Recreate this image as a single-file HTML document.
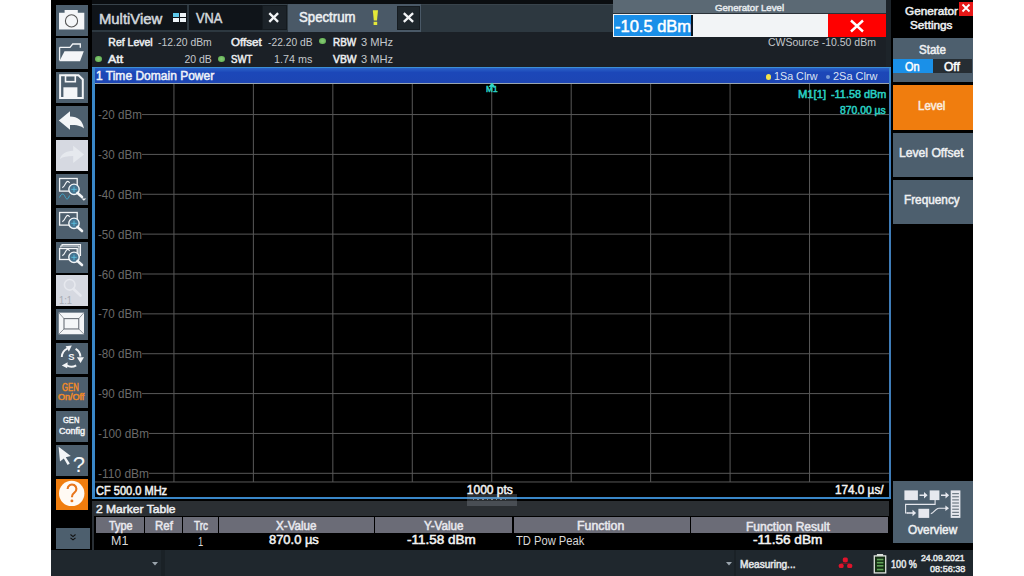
<!DOCTYPE html>
<html><head><meta charset="utf-8"><title>Spectrum</title>
<style>
*{margin:0;padding:0;box-sizing:border-box}
html,body{width:1024px;height:576px;overflow:hidden;background:#fff}
body{position:relative;font-family:"Liberation Sans",sans-serif;color:#e8eaec}
.a{position:absolute}
.t{position:absolute;white-space:nowrap;line-height:1;transform-origin:0 0}
.btn{position:absolute;left:56px;width:32px;height:31px;background:#4d5f6e}
.btn svg{position:absolute;left:0;top:0;overflow:visible}
.sk{position:absolute;left:893px;width:80px;background:#4d5f6e}
.hdr{position:absolute;top:517px;height:16px;background:#6b6c77}
</style></head><body>
<div class="a" style="left:51px;top:0px;width:41px;height:550px;background:#000;"></div>
<div class="a" style="left:92px;top:0px;width:799px;height:4px;background:#0a0d10;"></div>
<div class="a" style="left:92px;top:4px;width:799px;height:28px;background:#2d3840;"></div>
<div class="a" style="left:92px;top:4px;width:799px;height:1px;background:#38434b;"></div>
<div class="a" style="left:92px;top:5px;width:95px;height:25px;background:#0f1419;"></div>
<div class="a" style="left:189px;top:5px;width:73px;height:25px;background:#0f1419;"></div>
<div class="a" style="left:262px;top:5px;width:25px;height:25px;background:#141a1f;"></div>
<div class="a" style="left:263px;top:6px;width:23px;height:23px;background:#1c2329;"></div>
<div class="a" style="left:288px;top:4px;width:133px;height:28px;background:#4a5967;"></div>
<div class="a" style="left:397px;top:6px;width:23px;height:24px;background:#161c21;"></div>
<div class="a" style="left:398px;top:7px;width:21px;height:22px;background:#1f272d;"></div>
<div class="a" style="left:173px;top:13px;width:6px;height:4px;background:#5cc8ea;"></div>
<div class="a" style="left:180px;top:13px;width:6px;height:4px;background:#eef4f8;"></div>
<div class="a" style="left:173px;top:18px;width:6px;height:4px;background:#eef4f8;"></div>
<div class="a" style="left:180px;top:18px;width:6px;height:4px;background:#eef4f8;"></div>
<svg class="a" style="left:267px;top:11px" width="13" height="13"><path d="M2.3 2.1L11.1 10.9M11.1 2.1L2.3 10.9" stroke="#f2f4f6" stroke-width="2.3"/></svg>
<svg class="a" style="left:402px;top:11px" width="13" height="13"><path d="M1.8 2.1L11.1 10.9M11.1 2.1L1.8 10.9" stroke="#f2f4f6" stroke-width="2.3"/></svg>
<svg class="a" style="left:371px;top:9px" width="9" height="17"><path d="M1.8 1.2h5.2l-1 10.3h-3.2z" fill="#e4e838"/><rect x="2.6" y="12.8" width="3.6" height="3.2" fill="#e4e838"/></svg>
<div class="a" style="left:92px;top:32px;width:799px;height:35px;background:#1b2026;"></div>
<div class="a" style="left:886px;top:0px;width:5px;height:67px;background:#1d242a;"></div>
<div class="a" style="left:95px;top:55.6px;width:7px;height:6.6px;border-radius:50%;background:radial-gradient(#88cc78,#5aaa4a)"></div>
<div class="a" style="left:218px;top:55.6px;width:7px;height:6.6px;border-radius:50%;background:radial-gradient(#88cc78,#5aaa4a)"></div>
<div class="a" style="left:319px;top:37.6px;width:7px;height:6.6px;border-radius:50%;background:radial-gradient(#88cc78,#5aaa4a)"></div>
<div class="a" style="left:613px;top:0px;width:273px;height:13px;background:#5b6974;"></div>
<div class="a" style="left:613px;top:13px;width:273px;height:1px;background:#2a3138;"></div>
<div class="a" style="left:613px;top:14px;width:215px;height:23px;background:#f2f4f6;"></div>
<div class="a" style="left:614px;top:15px;width:77px;height:21px;background:#1a8fe8;"></div>
<div class="a" style="left:691px;top:15px;width:2px;height:21px;background:#0a1520;"></div>
<div class="a" style="left:828px;top:14px;width:58px;height:23px;background:#ff0000;"></div>
<svg class="a" style="left:849px;top:19px" width="16" height="14"><path d="M2 1.5L14 12.5M14 1.5L2 12.5" stroke="#fff" stroke-width="2.4"/></svg>
<div class="a" style="left:92px;top:67px;width:798.5px;height:432px;background:#3a87c8;"></div>
<div class="a" style="left:888.5px;top:83px;width:2px;height:414px;background:#3f7cb8;"></div>
<div class="a" style="left:92px;top:66.8px;width:798.5px;height:1.6px;background:#3d8fd6;"></div>
<div class="a" style="left:95px;top:68.4px;width:793.5px;height:14.6px;background:linear-gradient(#2a62c8,#1c47b8 30%,#1d46b4);"></div>
<div class="a" style="left:95px;top:83px;width:793.5px;height:414px;background:#000;"></div>
<svg class="a" style="left:95px;top:83px" width="794" height="414"><g stroke="#585858" stroke-width="1" fill="none"><rect x="0" y="0" width="794" height="1" fill="#9aa6ae" stroke="none"/><line x1="78.94" y1="1" x2="78.94" y2="399"/><line x1="158.39" y1="1" x2="158.39" y2="399"/><line x1="237.84" y1="1" x2="237.84" y2="399"/><line x1="317.29" y1="1" x2="317.29" y2="399"/><line x1="396.74" y1="1" x2="396.74" y2="399"/><line x1="476.19" y1="1" x2="476.19" y2="399"/><line x1="555.64" y1="1" x2="555.64" y2="399"/><line x1="635.09" y1="1" x2="635.09" y2="399"/><line x1="714.54" y1="1" x2="714.54" y2="399"/><line x1="0" y1="31.56" x2="794" y2="31.56"/><line x1="0" y1="71.42" x2="794" y2="71.42"/><line x1="0" y1="111.28" x2="794" y2="111.28"/><line x1="0" y1="151.14" x2="794" y2="151.14"/><line x1="0" y1="191.00" x2="794" y2="191.00"/><line x1="0" y1="230.86" x2="794" y2="230.86"/><line x1="0" y1="270.72" x2="794" y2="270.72"/><line x1="0" y1="310.58" x2="794" y2="310.58"/><line x1="0" y1="350.44" x2="794" y2="350.44"/><line x1="0" y1="390.30" x2="794" y2="390.30"/><line x1="0" y1="398.97" x2="794" y2="398.97"/></g></svg>
<div class="a" style="left:95px;top:108.56px;width:46.7px;height:12px;background:#000;"></div>
<div class="a" style="left:95px;top:148.42px;width:46.7px;height:12px;background:#000;"></div>
<div class="a" style="left:95px;top:188.28px;width:46.7px;height:12px;background:#000;"></div>
<div class="a" style="left:95px;top:228.14px;width:46.7px;height:12px;background:#000;"></div>
<div class="a" style="left:95px;top:268px;width:46.7px;height:12px;background:#000;"></div>
<div class="a" style="left:95px;top:307.86px;width:46.7px;height:12px;background:#000;"></div>
<div class="a" style="left:95px;top:347.72px;width:46.7px;height:12px;background:#000;"></div>
<div class="a" style="left:95px;top:387.58px;width:46.7px;height:12px;background:#000;"></div>
<div class="a" style="left:95px;top:427.44px;width:54.15px;height:12px;background:#000;"></div>
<div class="a" style="left:95px;top:467.3px;width:54.15px;height:12px;background:#000;"></div>
<div class="a" style="left:765.5px;top:74px;width:5.5px;height:5.5px;border-radius:50%;background:#f2e24a"></div>
<div class="a" style="left:825.5px;top:74.5px;width:4.5px;height:4.5px;border-radius:50%;background:#7a9ed8"></div>
<svg class="a" style="left:488px;top:82px" width="8" height="6"><path d="M4 0.5L7.5 5H0.5z" fill="#30d8c0"/></svg>
<div class="a" style="left:92px;top:499px;width:799px;height:51px;background:#000;"></div>
<div class="a" style="left:92px;top:501px;width:1.5px;height:49px;background:#2a3036;"></div>
<div class="a" style="left:94px;top:501px;width:795px;height:15px;background:#2b2f33;"></div>
<div class="a" style="left:467px;top:494px;width:50px;height:11.5px;background:rgba(150,160,172,0.28);"></div>
<div class="a" style="left:473px;top:499px;width:35px;height:1px;background:repeating-linear-gradient(90deg,rgba(200,205,210,0.55) 0 1.5px,transparent 1.5px 4.5px)"></div>
<div class="a" style="left:96px;top:517px;width:48px;height:16px;background:#6b6c77;"></div>
<div class="a" style="left:145px;top:517px;width:37px;height:16px;background:#6b6c77;"></div>
<div class="a" style="left:183px;top:517px;width:35px;height:16px;background:#6b6c77;"></div>
<div class="a" style="left:219px;top:517px;width:155px;height:16px;background:#6b6c77;"></div>
<div class="a" style="left:375px;top:517px;width:137px;height:16px;background:#6b6c77;"></div>
<div class="a" style="left:513.5px;top:517px;width:176.5px;height:16px;background:#6b6c77;"></div>
<div class="a" style="left:691px;top:517px;width:196.5px;height:16px;background:#6b6c77;"></div>
<div class="a" style="left:51px;top:550px;width:922px;height:26px;background:#1f272d;"></div>
<div class="a" style="left:161px;top:550px;width:4px;height:26px;background:#1a2126;"></div>
<div class="a" style="left:734px;top:550px;width:2px;height:26px;background:#1a2126;"></div>
<svg class="a" style="left:152px;top:562px" width="6" height="4"><path d="M0 0H6L3 3.5z" fill="#9aa4ac"/></svg>
<svg class="a" style="left:726px;top:562px" width="6" height="4"><path d="M0 0H6L3 3.5z" fill="#9aa4ac"/></svg>
<svg class="a" style="left:836px;top:555px" width="18" height="16"><g fill="#e0142c"><rect x="6.8" y="2.6" width="5" height="4.6" rx="1.5"/><rect x="2.8" y="8.8" width="4.8" height="4.2" rx="1.5"/><rect x="11.2" y="8.8" width="5" height="4.2" rx="1.5"/></g><path d="M9.3 7V8.3M5.2 9V8.3H13.7V9" stroke="#a01020" stroke-width="0.8" fill="none"/></svg>
<svg class="a" style="left:873px;top:553px" width="14" height="21"><rect x="3.9" y="1" width="6.2" height="2.2" fill="#dfe3df"/><rect x="1.3" y="2.9" width="11.4" height="17" fill="#153015" stroke="#dfe3df" stroke-width="1.3"/><g fill="#62a45a"><rect x="3.9" y="5.75" width="6.5" height="1.6"/><rect x="3.9" y="8.9" width="6.5" height="1.6"/><rect x="3.9" y="12" width="6.5" height="1.6"/><rect x="3.9" y="15.75" width="6.5" height="1.6"/></g></svg>
<div class="a" style="left:891px;top:0px;width:82px;height:550px;background:#000;"></div>
<div class="a" style="left:959px;top:1.5px;width:14px;height:14px;background:#e81818;"></div>
<svg class="a" style="left:961px;top:3px" width="10" height="10"><path d="M1.5 1.5L8.5 8.5M8.5 1.5L1.5 8.5" stroke="#fff" stroke-width="1.8"/></svg>
<div class="sk" style="top:37.5px;height:44.5px"></div>
<div class="a" style="left:893px;top:59px;width:39.5px;height:14px;background:#1a90e8;"></div>
<div class="a" style="left:932.5px;top:59px;width:39.5px;height:14px;background:#262d33;"></div>
<div class="sk" style="top:85px;height:45px;background:#f07d0e"></div>
<div class="sk" style="top:132.5px;height:44.5px"></div>
<div class="sk" style="top:180px;height:44px"></div>
<div class="sk" style="top:481px;height:62px"></div>
<svg class="a" style="left:893px;top:481px" width="80" height="40"><g fill="#e6e8ee">
<rect x="11.4" y="9.4" width="13.5" height="9.7"/><rect x="36.7" y="9.4" width="9.7" height="9.7"/><rect x="25.4" y="27.8" width="10.8" height="9.1"/>
<rect x="57.7" y="9.4" width="9.7" height="27.5"/>
<path d="M26.5 13.5h4.5v-2.4l3.6 3.2-3.6 3.2v-2.4h-4.5z"/><path d="M48 13.5h4.5v-2.4l3.6 3.2-3.6 3.2v-2.4h-4.5z"/>
<path d="M14 31.2h5.5v-2.4l3.6 3.2-3.6 3.2v-2.4h-5.5z"/>
<path d="M52.4 24.6l3.6 2.7-3.6 2.7z"/>
</g><g stroke="#e6e8ee" stroke-width="1.1" fill="none"><path d="M42.1 19v4.4H12.6v8.6h2"/><path d="M37.8 32.6C40.5 32.6 42.5 27.3 45.9 27.3H53"/></g>
<g fill="#56646f"><rect x="59.2" y="12.2" width="6.7" height="1"/><rect x="59.2" y="15.3" width="6.7" height="1"/><rect x="59.2" y="18.4" width="6.7" height="1"/><rect x="59.2" y="21.5" width="6.7" height="1"/><rect x="59.2" y="24.6" width="6.7" height="1"/><rect x="59.2" y="27.7" width="6.7" height="1"/><rect x="59.2" y="30.8" width="6.7" height="1"/><rect x="59.2" y="33.9" width="6.7" height="1"/></g>
</svg>
<div class="btn" style="top:4.60px;background:#4d5f6e"><svg width="32" height="31"><path d="M8.6 5h13.2v2.8H28.3v16.6H3V7.8h5.6z" fill="#f4f6f8"/><circle cx="15.5" cy="15.9" r="6.1" fill="none" stroke="#555" stroke-width="1.1"/></svg></div>
<div class="btn" style="top:38.45px;background:#4d5f6e"><svg width="32" height="31"><path d="M3.6 9.3V22.5M3.6 9.3H14l2.7-3.3h7.6v3.7" fill="none" stroke="#f4f6f8" stroke-width="1.3"/><path d="M8.5 13.2H27.8L24 23.3H3.4z" fill="#f4f6f8"/></svg></div>
<div class="btn" style="top:72.30px;background:#4d5f6e"><svg width="32" height="31"><path d="M4.1 3.2H22.5L26.8 7.5V26H4.1z" fill="none" stroke="#f4f6f8" stroke-width="2"/><rect x="9.5" y="3.5" width="9.8" height="6.2" fill="none" stroke="#f4f6f8" stroke-width="1.6"/><rect x="7.4" y="15.3" width="14" height="11" fill="#f4f6f8"/></svg></div>
<div class="btn" style="top:106.15px;background:#4d5f6e"><svg width="32" height="31"><path d="M2.8 14.4L14 5.3V10.6C22 10.6 26.5 14.5 28 22.5C25 19.5 21 18.9 14 18.9V23.7z" fill="#f4f6f8"/></svg></div>
<div class="btn" style="top:140.00px;background:#d6d9e1"><svg width="32" height="31"><path d="M28 14.4L17.2 5.7V10.8C9.5 10.8 5 14.5 4 19C7 16.8 11 16 17.2 16V23z" fill="#e6e9ee"/></svg></div>
<div class="btn" style="top:173.85px;background:#4d5f6e"><svg width="32" height="31"><rect x="3.6" y="4.5" width="17.6" height="12.6" fill="none" stroke="#f4f6f8" stroke-width="1.3"/><path d="M6.2 13.6C8.8 13.6 9.4 7.4 11.6 7.4C12.6 7.4 13.2 8.2 13.6 9" fill="none" stroke="#f4f6f8" stroke-width="1.1"/><circle cx="18" cy="15.3" r="5.2" fill="#46738f" stroke="#f4f6f8" stroke-width="1.4"/><path d="M18 12.6V18M15.3 15.3H20.7" stroke="#5cc8ea" stroke-width="0.8"/><path d="M21.5 19L26 23" stroke="#f4f6f8" stroke-width="2.6" stroke-linecap="round"/><path d="M3.5 23.5C5.5 19 7.5 19 9 22.5S12 26 13.5 21.5" fill="none" stroke="#40a8cc" stroke-width="1"/><path d="M25.5 24.6H30.3L27.9 26.8z" fill="#f4f6f8"/></svg></div>
<div class="btn" style="top:207.70px;background:#4d5f6e"><svg width="32" height="31"><rect x="3.6" y="4.5" width="17.6" height="12.6" fill="none" stroke="#f4f6f8" stroke-width="1.3"/><path d="M6.2 13.6C8.8 13.6 9.4 7.4 11.6 7.4C12.6 7.4 13.2 8.2 13.6 9" fill="none" stroke="#f4f6f8" stroke-width="1.1"/><circle cx="18" cy="15.3" r="5.2" fill="#46738f" stroke="#f4f6f8" stroke-width="1.4"/><path d="M18 12.6V18M15.3 15.3H20.7" stroke="#5cc8ea" stroke-width="0.8"/><path d="M21.5 19L26 23" stroke="#f4f6f8" stroke-width="2.6" stroke-linecap="round"/></svg></div>
<div class="btn" style="top:241.55px;background:#4d5f6e"><svg width="32" height="31"><path d="M6 4V2.5H24.5V14M4.8 5.5V4H23V15" fill="none" stroke="#f4f6f8" stroke-width="1.1"/><rect x="3.6" y="6.5" width="17.6" height="11" fill="none" stroke="#f4f6f8" stroke-width="1.3"/><path d="M6.2 13.6C8.8 13.6 9.4 7.4 11.6 7.4C12.6 7.4 13.2 8.2 13.6 9" fill="none" stroke="#f4f6f8" stroke-width="1.1"/><circle cx="18" cy="15.3" r="5.2" fill="#46738f" stroke="#f4f6f8" stroke-width="1.4"/><path d="M18 12.6V18M15.3 15.3H20.7" stroke="#5cc8ea" stroke-width="0.8"/><path d="M21.5 19L26 23" stroke="#f4f6f8" stroke-width="2.6" stroke-linecap="round"/></svg></div>
<div class="btn" style="top:275.40px;background:#d6d9e1"><svg width="32" height="31"><circle cx="13.7" cy="9.8" r="5.3" fill="none" stroke="#e6e8ee" stroke-width="1.6"/><path d="M17.5 14L24.5 20.5" stroke="#e6e8ee" stroke-width="2.6" stroke-linecap="round"/></svg></div>
<div class="btn" style="top:309.25px;background:#4d5f6e"><svg width="32" height="31"><path d="M2.75 3.65H28V25.25H2.75z" fill="#f4f6f8"/><path d="M2.75 3.65L8 9.6M28 3.65L22.75 9.6M2.75 25.25L8 19.95M28 25.25L22.75 19.95" stroke="#7a8088" stroke-width="0.8"/><rect x="8" y="9.6" width="14.75" height="10.35" fill="#f4f6f8" stroke="#6a7078" stroke-width="1.1"/></svg></div>
<div class="btn" style="top:343.10px;background:#4d5f6e"><svg width="32" height="31"><g fill="none" stroke="#f4f6f8" stroke-width="2"><path d="M5.8 14A9.6 9.6 0 0 1 11.2 5.6"/><path d="M19.6 5.9A9.6 9.6 0 0 1 24.4 13.6"/><path d="M20.2 22.3A9.6 9.6 0 0 1 10.6 22.4"/></g><g fill="#f4f6f8"><path d="M9.6 3.2L15.8 2.6L12.9 8.6z"/><path d="M20.8 14.2H28L24.6 20z"/><path d="M11.6 19.2L11.2 25.2L5.8 22.6z"/></g><text x="15.4" y="17.4" font-family="Liberation Sans" font-size="9.5" font-weight="bold" fill="#f4f6f8" text-anchor="middle">S</text></svg></div>
<div class="btn" style="top:376.95px;background:#4d5f6e"></div>
<div class="btn" style="top:410.80px;background:#4d5f6e"></div>
<div class="btn" style="top:444.65px;background:#4d5f6e"><svg width="32" height="31"><path d="M2.6 1.8L14.8 11.1L9.8 12.2L13.8 18.6L11.6 20L7.8 13.4L4 16.5z" fill="#f4f6f8"/><text x="22.8" y="27.2" font-family="Liberation Sans" font-size="22" fill="#f4f6f8" text-anchor="middle">?</text></svg></div>
<div class="btn" style="top:478.50px;background:#f07d0e"><svg width="32" height="31"><circle cx="15.7" cy="14.4" r="12.7" fill="#fffaf4"/><path d="M11.6 9.9A4.4 4.4 0 1 1 18.4 13.6C16.6 14.8 15.9 15.8 15.9 18.2" fill="none" stroke="#e8761c" stroke-width="2.1"/><circle cx="15.9" cy="21.9" r="1.45" fill="#e8761c"/></svg></div>
<div class="btn" style="top:528px;height:21px;width:34px"><svg width="34" height="21"><path d="M14.5 6.5L17 8.6L19.5 6.5M14.5 9.8L17 11.9L19.5 9.8" fill="none" stroke="#111" stroke-width="1.1"/></svg></div>
<div class="t" style="left:98.64px;top:12.20px;font-size:14px;color:#d2d7dc;-webkit-text-stroke-width:0.5px;transform:scaleX(1.0593);">MultiView</div>
<div class="t" style="left:196.00px;top:11.20px;font-size:14px;color:#d2d7dc;-webkit-text-stroke-width:0.5px;transform:scaleX(0.9138);">VNA</div>
<div class="t" style="left:298.60px;top:10.20px;font-size:14px;color:#eef1f4;-webkit-text-stroke-width:0.5px;transform:scaleX(0.9433);">Spectrum</div>
<div class="t" style="left:108.30px;top:36.50px;font-size:10.5px;color:#eceef0;-webkit-text-stroke-width:0.5px;">Ref Level</div>
<div class="t" style="left:158.00px;top:36.50px;font-size:10.5px;color:#c4c8cc;transform:scaleX(0.9907);">-12.20 dBm</div>
<div class="t" style="left:231.40px;top:36.50px;font-size:10.5px;color:#eceef0;-webkit-text-stroke-width:0.5px;transform:scaleX(1.1000);">Offset</div>
<div class="t" style="left:268.30px;top:36.50px;font-size:10.5px;color:#c4c8cc;transform:scaleX(0.9778);">-22.20 dB</div>
<div class="t" style="left:332.50px;top:36.50px;font-size:10.5px;color:#eceef0;-webkit-text-stroke-width:0.5px;transform:scaleX(0.9480);">RBW</div>
<div class="t" style="left:361.34px;top:36.50px;font-size:10.5px;color:#c4c8cc;transform:scaleX(1.0586);">3 MHz</div>
<div class="t" style="left:108.30px;top:54.00px;font-size:10.5px;color:#eceef0;-webkit-text-stroke-width:0.5px;transform:scaleX(1.1846);">Att</div>
<div class="t" style="left:184.40px;top:54.00px;font-size:10.5px;color:#c4c8cc;">20 dB</div>
<div class="t" style="left:231.40px;top:54.00px;font-size:10.5px;color:#eceef0;-webkit-text-stroke-width:0.5px;transform:scaleX(0.9167);">SWT</div>
<div class="t" style="left:274.38px;top:54.00px;font-size:10.5px;color:#c4c8cc;transform:scaleX(1.0250);">1.74 ms</div>
<div class="t" style="left:332.50px;top:54.00px;font-size:10.5px;color:#eceef0;-webkit-text-stroke-width:0.5px;transform:scaleX(0.9875);">VBW</div>
<div class="t" style="left:361.34px;top:54.00px;font-size:10.5px;color:#c4c8cc;transform:scaleX(1.0586);">3 MHz</div>
<div class="t" style="left:768.00px;top:37.00px;font-size:10.5px;color:#c4c8cc;">CWSource -10.50 dBm</div>
<div class="t" style="left:714.60px;top:2.90px;font-size:9.5px;color:#e4e8ec;-webkit-text-stroke-width:0.5px;transform:scaleX(1.0132);">Generator Level</div>
<div class="t" style="left:615.00px;top:18.00px;font-size:16.5px;color:#ffffff;-webkit-text-stroke-width:0.5px;">-10.5 dBm</div>
<div class="t" style="left:95.74px;top:70.30px;font-size:12.5px;color:#eef2fa;-webkit-text-stroke-width:0.5px;transform:scaleX(0.9615);">1 Time Domain Power</div>
<div class="t" style="left:774.07px;top:71.40px;font-size:11.5px;color:#dce4f4;transform:scaleX(0.9348);">1Sa Clrw</div>
<div class="t" style="left:833.25px;top:71.40px;font-size:11.5px;color:#dce4f4;transform:scaleX(0.9522);">2Sa Clrw</div>
<div class="t" style="left:797.60px;top:88.50px;font-size:10.5px;color:#2ad0c4;-webkit-text-stroke-width:0.5px;transform:scaleX(1.0692);">M1[1]</div>
<div class="t" style="left:830.50px;top:89.00px;font-size:10.5px;color:#2ad0c4;-webkit-text-stroke-width:0.5px;transform:scaleX(1.0358);">-11.58 dBm</div>
<div class="t" style="left:840.00px;top:105.00px;font-size:10.5px;color:#2ad0c4;-webkit-text-stroke-width:0.5px;transform:scaleX(0.9870);">870.00 µs</div>
<div class="t" style="left:486.30px;top:85.00px;font-size:8.5px;color:#2ad0c4;-webkit-text-stroke-width:0.5px;transform:scaleX(0.9750);">M1</div>
<div class="t" style="left:98.14px;top:108.16px;font-size:13.5px;color:#6a6a6a;transform:scaleX(0.8612);">-20 dBm</div>
<div class="t" style="left:98.14px;top:148.02px;font-size:13.5px;color:#6a6a6a;transform:scaleX(0.8612);">-30 dBm</div>
<div class="t" style="left:98.14px;top:187.88px;font-size:13.5px;color:#6a6a6a;transform:scaleX(0.8612);">-40 dBm</div>
<div class="t" style="left:98.14px;top:227.74px;font-size:13.5px;color:#6a6a6a;transform:scaleX(0.8612);">-50 dBm</div>
<div class="t" style="left:98.14px;top:267.60px;font-size:13.5px;color:#6a6a6a;transform:scaleX(0.8612);">-60 dBm</div>
<div class="t" style="left:98.14px;top:307.46px;font-size:13.5px;color:#6a6a6a;transform:scaleX(0.8612);">-70 dBm</div>
<div class="t" style="left:98.14px;top:347.32px;font-size:13.5px;color:#6a6a6a;transform:scaleX(0.8612);">-80 dBm</div>
<div class="t" style="left:98.14px;top:387.18px;font-size:13.5px;color:#6a6a6a;transform:scaleX(0.8612);">-90 dBm</div>
<div class="t" style="left:98.13px;top:427.04px;font-size:13.5px;color:#6a6a6a;transform:scaleX(0.8711);">-100 dBm</div>
<div class="t" style="left:98.11px;top:466.90px;font-size:13.5px;color:#6a6a6a;transform:scaleX(0.8866);">-110 dBm</div>
<div class="t" style="left:96.30px;top:484.80px;font-size:12px;color:#f2f2f2;-webkit-text-stroke-width:0.5px;transform:scaleX(0.9195);">CF 500.0 MHz</div>
<div class="t" style="left:466.80px;top:483.80px;font-size:12px;color:#f2f2f2;-webkit-text-stroke-width:0.5px;">1000 pts</div>
<div class="t" style="left:835.12px;top:484.10px;font-size:12px;color:#f2f2f2;-webkit-text-stroke-width:0.5px;transform:scaleX(0.9776);">174.0 µs/</div>
<div class="t" style="left:96.30px;top:503.90px;font-size:11.5px;color:#eceef0;-webkit-text-stroke-width:0.5px;transform:scaleX(1.0487);">2 Marker Table</div>
<div class="t" style="left:108.75px;top:520.40px;font-size:12px;color:#e8e8ee;-webkit-text-stroke-width:0.5px;transform:scaleX(0.9019);">Type</div>
<div class="t" style="left:154.64px;top:520.40px;font-size:12px;color:#e8e8ee;-webkit-text-stroke-width:0.5px;transform:scaleX(0.9556);">Ref</div>
<div class="t" style="left:193.90px;top:520.40px;font-size:12px;color:#e8e8ee;-webkit-text-stroke-width:0.5px;transform:scaleX(0.8294);">Trc</div>
<div class="t" style="left:276.00px;top:520.40px;font-size:12px;color:#e8e8ee;-webkit-text-stroke-width:0.5px;transform:scaleX(0.9690);">X-Value</div>
<div class="t" style="left:423.75px;top:520.40px;font-size:12px;color:#e8e8ee;-webkit-text-stroke-width:0.5px;transform:scaleX(0.9720);">Y-Value</div>
<div class="t" style="left:576.97px;top:520.40px;font-size:12px;color:#e8e8ee;-webkit-text-stroke-width:0.5px;transform:scaleX(1.0267);">Function</div>
<div class="t" style="left:746.49px;top:520.80px;font-size:12px;color:#e8e8ee;-webkit-text-stroke-width:0.5px;transform:scaleX(1.0060);">Function Result</div>
<div class="t" style="left:110.86px;top:535.20px;font-size:12px;color:#d8d8d8;transform:scaleX(1.0400);">M1</div>
<div class="t" style="left:197.82px;top:536.00px;font-size:12px;color:#d8d8d8;transform:scaleX(0.7800);">1</div>
<div class="t" style="left:269.40px;top:534.40px;font-size:12.5px;color:#f4f4f4;-webkit-text-stroke-width:0.5px;transform:scaleX(1.0333);">870.0 µs</div>
<div class="t" style="left:407.30px;top:534.40px;font-size:12.5px;color:#f4f4f4;-webkit-text-stroke-width:0.5px;transform:scaleX(1.0794);">-11.58 dBm</div>
<div class="t" style="left:515.60px;top:535.20px;font-size:12px;color:#d8d8d8;transform:scaleX(0.9315);">TD Pow Peak</div>
<div class="t" style="left:752.70px;top:534.00px;font-size:12.5px;color:#f4f4f4;-webkit-text-stroke-width:0.5px;transform:scaleX(1.0889);">-11.56 dBm</div>
<div class="t" style="left:739.50px;top:560.40px;font-size:10px;color:#e4e6e8;-webkit-text-stroke-width:0.5px;transform:scaleX(1.0091);">Measuring...</div>
<div class="t" style="left:890.60px;top:559.80px;font-size:10px;color:#e4e6e8;-webkit-text-stroke-width:0.5px;transform:scaleX(0.9103);">100 %</div>
<div class="t" style="left:921.00px;top:552.70px;font-size:9.5px;color:#e4e6e8;-webkit-text-stroke-width:0.5px;transform:scaleX(0.9167);">24.09.2021</div>
<div class="t" style="left:929.60px;top:563.50px;font-size:9.5px;color:#e4e6e8;-webkit-text-stroke-width:0.5px;transform:scaleX(0.9568);">08:56:38</div>
<div class="t" style="left:904.90px;top:6.30px;font-size:11.5px;color:#eef0f2;-webkit-text-stroke-width:0.5px;transform:scaleX(1.0231);">Generator</div>
<div class="t" style="left:910.30px;top:20.00px;font-size:11.5px;color:#eef0f2;-webkit-text-stroke-width:0.5px;transform:scaleX(1.0214);">Settings</div>
<div class="t" style="left:919.00px;top:44.00px;font-size:12px;color:#eef0f2;-webkit-text-stroke-width:0.5px;transform:scaleX(0.9643);">State</div>
<div class="t" style="left:904.90px;top:61.20px;font-size:12px;color:#ffffff;-webkit-text-stroke-width:0.5px;transform:scaleX(0.9125);">On</div>
<div class="t" style="left:944.00px;top:61.20px;font-size:12px;color:#ffffff;-webkit-text-stroke-width:0.5px;">Off</div>
<div class="t" style="left:918.24px;top:99.50px;font-size:12px;color:#fbeee0;-webkit-text-stroke-width:0.5px;transform:scaleX(0.9556);">Level</div>
<div class="t" style="left:899.49px;top:146.75px;font-size:12px;color:#eef0f2;-webkit-text-stroke-width:0.5px;transform:scaleX(1.0119);">Level Offset</div>
<div class="t" style="left:904.02px;top:194.20px;font-size:12px;color:#eef0f2;-webkit-text-stroke-width:0.5px;transform:scaleX(0.9821);">Frequency</div>
<div class="t" style="left:908.40px;top:523.80px;font-size:12px;color:#eef0f2;-webkit-text-stroke-width:0.5px;transform:scaleX(0.9840);">Overview</div>
<div class="t" style="left:61.90px;top:382.60px;font-size:10px;color:#f08a28;-webkit-text-stroke-width:0.5px;transform:scaleX(0.7714);">GEN</div>
<div class="t" style="left:57.80px;top:393.30px;font-size:8.8px;color:#f08a28;-webkit-text-stroke-width:0.5px;transform:scaleX(1.0231);">On/Off</div>
<div class="t" style="left:62.80px;top:416.20px;font-size:9.3px;color:#f0f2f4;-webkit-text-stroke-width:0.5px;transform:scaleX(0.8100);">GEN</div>
<div class="t" style="left:58.75px;top:426.20px;font-size:9.5px;color:#f0f2f4;-webkit-text-stroke-width:0.5px;transform:scaleX(0.9500);">Config</div>
<div class="t" style="left:59.06px;top:295.90px;font-size:10px;color:#a8acb4;transform:scaleX(0.9375);">1:1</div>
</body></html>
